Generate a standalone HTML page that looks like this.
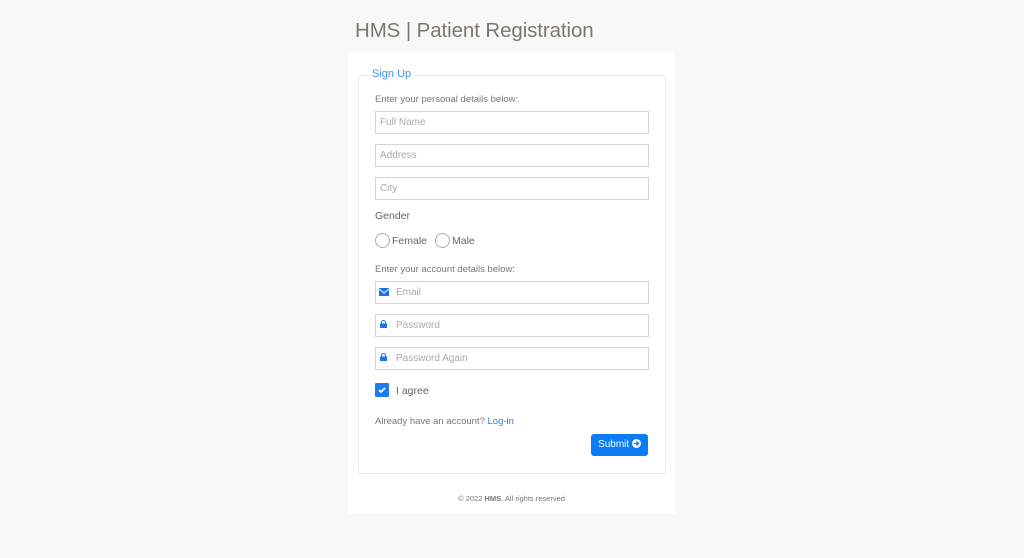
<!DOCTYPE html>
<html><head><style>
body{margin:0;background:#f8f8f8;font-family:"Liberation Sans",sans-serif;width:1024px;height:558px;position:relative;overflow:hidden}
.a{position:absolute}
h1{position:absolute;left:355px;top:19px;margin:0;font-weight:normal;font-size:20.5px;color:#7d766e;font-family:"Liberation Sans",sans-serif;letter-spacing:-0.1px}
.box{left:348px;top:52px;width:327px;height:462px;background:#fff}
.fs{left:358px;top:75px;width:306px;height:397px;border:1px solid #ebebeb;border-radius:4px}
.lg{left:368px;top:68px;background:#fff;padding:0 4px;color:#3d8ef7;font-size:11px}
.t{font-size:9.5px;color:#777}
.in{left:375px;width:272px;height:21px;border:1px solid #d5d5d5;font-size:10px;color:#aaa;line-height:21px;padding-left:4px;box-sizing:content-box}
.r{width:13px;height:13px;border:1px solid #aaa;border-radius:50%}
</style></head><body>
<h1>HMS | Patient Registration</h1>
<div class="a box"></div>
<div class="a fs"></div>
<div class="a lg">Sign Up</div>
<div class="a t" style="left:375px;top:94px">Enter your personal details below:</div>
<div class="a in" style="top:111px;width:268px">Full Name</div>
<div class="a in" style="top:144px;width:268px">Address</div>
<div class="a in" style="top:177px;width:268px">City</div>
<div class="a" style="left:375px;top:210px;font-size:10.5px;color:#666">Gender</div>
<div class="a r" style="left:375px;top:233px"></div>
<div class="a" style="left:392px;top:235px;font-size:10.5px;color:#666">Female</div>
<div class="a r" style="left:435px;top:233px"></div>
<div class="a" style="left:452px;top:235px;font-size:10.5px;color:#666">Male</div>
<div class="a t" style="left:375px;top:264px">Enter your account details below:</div>
<div class="a in" style="top:281px;width:252px;padding-left:20px">Email</div>
<svg class="a" style="left:379px;top:288px" width="10" height="8"><rect width="10" height="8" fill="#1a73e8"/><path d="M0 1L5 5L10 1" stroke="#fff" fill="none" stroke-width="1"/></svg>
<div class="a in" style="top:314px;width:252px;padding-left:20px">Password</div>
<svg class="a" style="left:380px;top:320px" width="7" height="8"><path d="M1.5 4V2.5a2 2 0 0 1 4 0V4" stroke="#1a73e8" fill="none"/><rect y="3.5" width="7" height="4.5" fill="#1a73e8"/></svg>
<div class="a in" style="top:347px;width:252px;padding-left:20px">Password Again</div>
<svg class="a" style="left:380px;top:353px" width="7" height="8"><path d="M1.5 4V2.5a2 2 0 0 1 4 0V4" stroke="#1a73e8" fill="none"/><rect y="3.5" width="7" height="4.5" fill="#1a73e8"/></svg>
<svg class="a" style="left:375px;top:383px" width="14" height="14"><rect width="14" height="14" rx="1" fill="#1a7cf0"/><path d="M4 7L6 9L10 5" stroke="#fff" stroke-width="1.8" fill="none"/></svg>
<div class="a" style="left:396px;top:385px;font-size:10.5px;color:#666">I agree</div>
<div class="a t" style="left:375px;top:416px">Already have an account? <span style="color:#2a7ae2">Log-in</span></div>
<div class="a" style="left:591px;top:434px;width:57px;height:22px;background:#0a7cf7;border-radius:3px;color:#fff;font-size:10px;line-height:22px;text-align:center">Submit <svg width="9" height="9" style="vertical-align:-1px"><circle cx="4.5" cy="4.5" r="4.5" fill="#fff"/><path d="M2 4.5H6.5M4.5 2.5L6.5 4.5L4.5 6.5" stroke="#0a7cf7" stroke-width="1.3" fill="none"/></svg></div>
<div class="a" style="left:348px;width:327px;top:494px;text-align:center;font-size:7.5px;color:#777">© 2022 <b>HMS</b>. All rights reserved</div>
</body></html>
